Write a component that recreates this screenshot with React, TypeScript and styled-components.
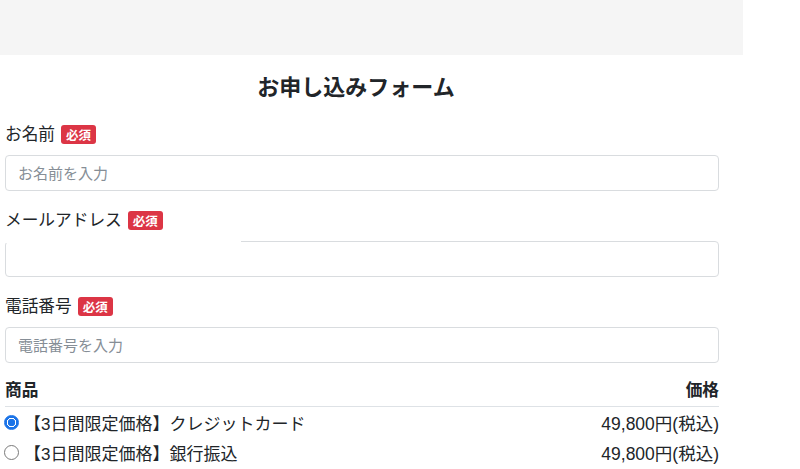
import React, { useState } from 'react'
import styled, { createGlobalStyle } from 'styled-components'

const GlobalStyle = createGlobalStyle`
  body {
    margin: 0;
    background: #fff;
    color: #212529;
    font-family: "Liberation Sans", "Noto Sans CJK JP", sans-serif;
  }
`

const Banner = styled.div`
  width: 743px;
  height: 55px;
  background: #f5f5f5;
`

const Form = styled.form`
  width: 714px;
  padding: 19px 0 0 5px;
`

const Title = styled.h2`
  margin: 0 12px 19px 0;
  font-size: 22px;
  font-weight: 700;
  line-height: 28px;
  text-align: center;
`

const Field = styled.div`
  margin-bottom: 16px;
`

const Label = styled.label`
  display: flex;
  align-items: center;
  gap: 6px;
  height: 24px;
  margin-bottom: 10px;
  font-size: 16.7px;
`

const Badge = styled.span`
  display: inline-flex;
  align-items: center;
  justify-content: center;
  width: 35px;
  height: 19px;
  border-radius: 3px;
  background: #dc3545;
  color: #fff;
  font-size: 12.5px;
  font-weight: 700;
  margin-top: 2px;
`

const InputWrap = styled.div<{ $maskTop?: boolean }>`
  position: relative;

  &::after {
    content: '';
    display: ${({ $maskTop }) => ($maskTop ? 'block' : 'none')};
    position: absolute;
    left: 0;
    top: 0;
    width: 236px;
    height: 2px;
    background: #fff;
  }
`

const Input = styled.input`
  box-sizing: border-box;
  display: block;
  width: 100%;
  height: 36px;
  padding: 0 12px;
  border: 1px solid #d9dcdf;
  border-radius: 4px;
  font-family: inherit;
  font-size: 15px;
  color: #212529;
  outline: none;

  &::placeholder {
    color: #868e96;
  }
`

const Table = styled.div``

const HeadRow = styled.div`
  display: flex;
  justify-content: space-between;
  line-height: 24px;
  padding-bottom: 3px;
  border-bottom: 1px solid #dee2e6;
  font-size: 16.7px;
  font-weight: 700;
`

const ItemRow = styled.label`
  display: flex;
  align-items: center;
  height: 30px;
  font-size: 17px;
`

const Radio = styled.input`
  appearance: none;
  box-sizing: border-box;
  flex-shrink: 0;
  width: 15px;
  height: 15px;
  margin: 0 5px 0 -1px;
  border: 1px solid #7a7a7a;
  border-radius: 50%;
  background: #fff;

  &:checked {
    border: 1px solid #1a73e8;
    background: radial-gradient(circle, #1a73e8 0 3.5px, #fff 4px 4.5px, #1a73e8 5px);
  }
`

const Name = styled.span`
  flex: 1;
`

const Price = styled.span`
  font-size: 17.5px;
`

const products = [
  { id: 'card', name: '【3日間限定価格】クレジットカード', price: '49,800円(税込)' },
  { id: 'bank', name: '【3日間限定価格】銀行振込', price: '49,800円(税込)' },
]

export default function App() {
  const [selected, setSelected] = useState('card')

  return (
    <>
      <GlobalStyle />
      <Banner />
      <Form onSubmit={(e) => e.preventDefault()}>
        <Title>お申し込みフォーム</Title>

        <Field>
          <Label>
            お名前<Badge>必須</Badge>
          </Label>
          <InputWrap>
            <Input type="text" placeholder="お名前を入力" />
          </InputWrap>
        </Field>

        <Field>
          <Label>
            メールアドレス<Badge>必須</Badge>
          </Label>
          <InputWrap $maskTop>
            <Input type="email" />
          </InputWrap>
        </Field>

        <Field>
          <Label>
            電話番号<Badge>必須</Badge>
          </Label>
          <InputWrap>
            <Input type="tel" placeholder="電話番号を入力" />
          </InputWrap>
        </Field>

        <Table>
          <HeadRow>
            <span>商品</span>
            <span>価格</span>
          </HeadRow>
          {products.map((p) => (
            <ItemRow key={p.id}>
              <Radio
                type="radio"
                name="product"
                checked={selected === p.id}
                onChange={() => setSelected(p.id)}
              />
              <Name>{p.name}</Name>
              <Price>{p.price}</Price>
            </ItemRow>
          ))}
        </Table>
      </Form>
    </>
  )
}
